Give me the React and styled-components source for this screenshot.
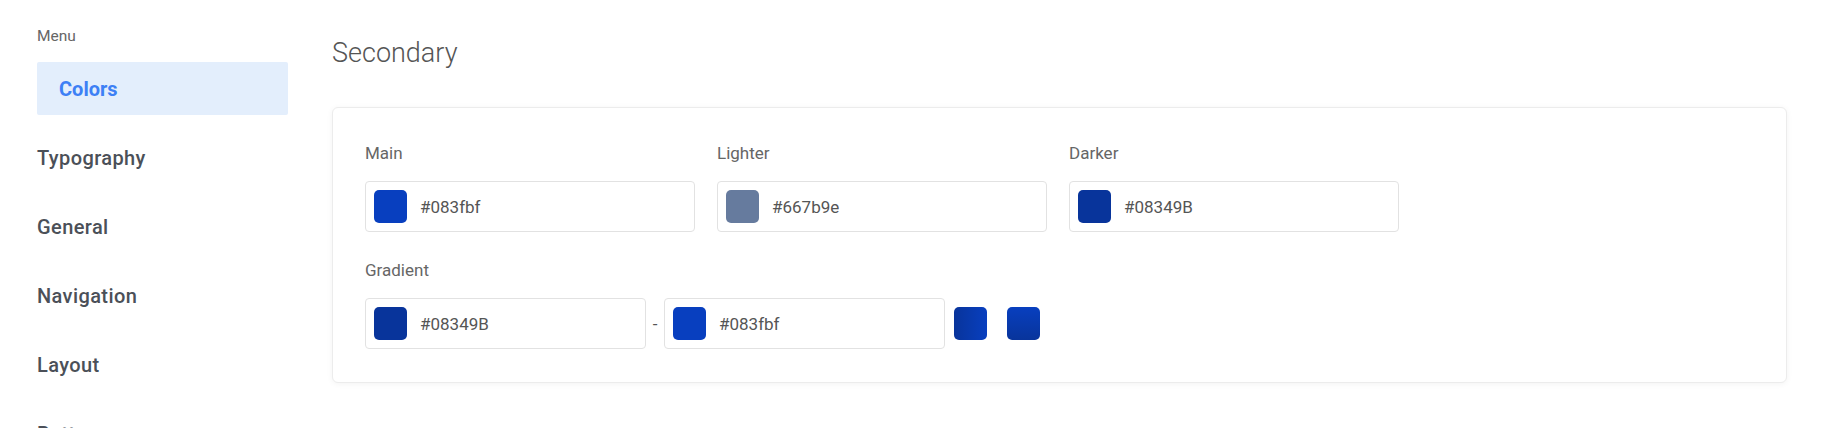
import styled, { createGlobalStyle } from "styled-components";

const GlobalStyle = createGlobalStyle`
  body {
    margin: 0;
    background: #fff;
    font-family: Roboto, "Liberation Sans", sans-serif;
  }
`;

const menu = ["Colors", "Typography", "General", "Navigation", "Layout", "Buttons"];

export default function App() {
  return (
    <>
      <GlobalStyle />
      <Page>
        <Sidebar>
          <MenuTitle>Menu</MenuTitle>
          {menu.map((item) => (
            <MenuItem key={item} $active={item === "Colors"}>
              {item}
            </MenuItem>
          ))}
        </Sidebar>
        <Main>
          <Heading>Secondary</Heading>
          <Card>
            <Row>
              <Field>
                <Label>Main</Label>
                <ColorInput>
                  <Swatch $bg="#083fbf" />
                  <Value>#083fbf</Value>
                </ColorInput>
              </Field>
              <Field>
                <Label>Lighter</Label>
                <ColorInput>
                  <Swatch $bg="#667b9e" />
                  <Value>#667b9e</Value>
                </ColorInput>
              </Field>
              <Field>
                <Label>Darker</Label>
                <ColorInput>
                  <Swatch $bg="#08349B" />
                  <Value>#08349B</Value>
                </ColorInput>
              </Field>
            </Row>
            <GradientBlock>
              <Label>Gradient</Label>
              <GradientRow>
                <ColorInput $width="281px">
                  <Swatch $bg="#08349B" />
                  <Value>#08349B</Value>
                </ColorInput>
                <Dash>-</Dash>
                <ColorInput $width="281px">
                  <Swatch $bg="#083fbf" />
                  <Value>#083fbf</Value>
                </ColorInput>
                <Preview $bg="linear-gradient(to right, #08349B, #083fbf)" />
                <Preview $bg="linear-gradient(to bottom, #083fbf, #08349B)" />
              </GradientRow>
            </GradientBlock>
          </Card>
        </Main>
      </Page>
    </>
  );
}

const Page = styled.div`
  display: flex;
  height: 428px;
  overflow: hidden;
`;

const Sidebar = styled.nav`
  width: 251px;
  flex-shrink: 0;
  padding: 27px 32px 0 37px;
  display: flex;
  flex-direction: column;
  gap: 16px;
`;

const MenuTitle = styled.div`
  font-size: 15.5px;
  line-height: 18px;
  color: #666;
  margin-bottom: 1px;
`;

const MenuItem = styled.div`
  height: 53px;
  flex-shrink: 0;
  display: flex;
  align-items: center;
  padding-left: ${(p) => (p.$active ? "22px" : "0")};
  background: ${(p) => (p.$active ? "#e3eefc" : "transparent")};
  border-radius: 2px;
  font-size: 20px;
  letter-spacing: ${(p) => (p.$active ? "0" : "0.4px")};
  font-weight: ${(p) => (p.$active ? 700 : 500)};
  color: ${(p) => (p.$active ? "#3d80f5" : "#4b5058")};
`;

const Main = styled.main`
  flex: 1;
  padding: 37px 53px 0 12px;
`;

const Heading = styled.h2`
  margin: 0 0 38px;
  font-size: 27px;
  line-height: 32px;
  font-weight: 300;
  color: #555;
`;

const Card = styled.section`
  background: #fff;
  border: 1px solid #ececec;
  border-radius: 6px;
  box-shadow: 0 1px 6px rgba(0, 0, 0, 0.05);
  padding: 34px 32px 33px;
`;

const Row = styled.div`
  display: flex;
  gap: 22px;
`;

const Field = styled.div`
  display: flex;
  flex-direction: column;
`;

const Label = styled.div`
  font-size: 17px;
  line-height: 22px;
  color: #666;
  margin-bottom: 17px;
`;

const ColorInput = styled.div`
  box-sizing: border-box;
  width: ${(p) => p.$width || "330px"};
  height: 51px;
  border: 1px solid #e2e2e2;
  border-radius: 4px;
  padding: 0 8px;
  display: flex;
  align-items: center;
  gap: 13px;
`;

const Swatch = styled.div`
  width: 33px;
  height: 33px;
  border-radius: 5px;
  background: ${(p) => p.$bg};
`;

const Value = styled.span`
  font-size: 17px;
  color: #555;
`;

const GradientBlock = styled.div`
  margin-top: 27px;
`;

const GradientRow = styled.div`
  display: flex;
  align-items: center;
`;

const Dash = styled.span`
  width: 18px;
  text-align: center;
  font-size: 17px;
  color: #555;
`;

const Preview = styled.div`
  width: 33px;
  height: 33px;
  border-radius: 5px;
  background: ${(p) => p.$bg};
  margin-left: 9px;
  & + & {
    margin-left: 20px;
  }
`;
